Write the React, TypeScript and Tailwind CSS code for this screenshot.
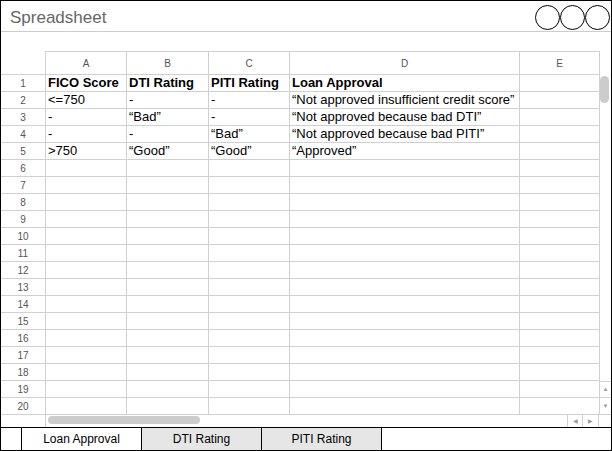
import React from "react";

const cols = [
    { key: "A", w: "w-[81px]" },
    { key: "B", w: "w-[82px]" },
    { key: "C", w: "w-[81px]" },
    { key: "D", w: "w-[230px]" },
    { key: "E", w: "w-[80px]" },
];

const data: string[][] = [
    ["FICO Score", "DTI Rating", "PITI Rating", "Loan Approval", ""],
    ["<=750", "-", "-", "\u201CNot approved insufficient credit score\u201D", ""],
    ["-", "\u201CBad\u201D", "-", "\u201CNot approved because bad DTI\u201D", ""],
    ["-", "-", "\u201CBad\u201D", "\u201CNot approved because bad PITI\u201D", ""],
    [">750", "\u201CGood\u201D", "\u201CGood\u201D", "\u201CApproved\u201D", ""],
];

const rows = Array.from({ length: 20 }, (_, i) => i + 1);

export default function App() {
    return (
        <div className="flex h-[451px] w-[612px] flex-col border border-black bg-white font-['Liberation_Sans',Arial,sans-serif] text-black">
            {/* title bar */}
            <div className="flex h-[31px] shrink-0 items-start justify-between border-b border-[#cccccc]">
                <span className="pl-[9px] pt-[6px] text-[17px] leading-[22px] text-[#666666]">Spreadsheet</span>
                <div className="flex pr-[1px] pt-[4px]">
                    <div className="h-[25px] w-[25px] rounded-full border border-black" />
                    <div className="h-[25px] w-[25px] rounded-full border border-black" />
                    <div className="h-[25px] w-[25px] rounded-full border border-black" />
                </div>
            </div>

            <div className="h-[19px] shrink-0" />

            {/* grid + vertical scrollbar */}
            <div className="flex shrink-0">
                <div className="flex w-[599px] flex-col">
                    <div className="flex h-[24px]">
                        <div className="w-[45px] border-b border-r border-[#d0d0d0]" />
                        {cols.map((c) => (
                            <div
                                key={c.key}
                                className={`${c.w} flex items-center justify-center border-b border-r border-t border-[#d0d0d0] text-[10px] text-[#555555]`}
                            >
                                {c.key}
                            </div>
                        ))}
                    </div>
                    {rows.map((r) => (
                        <div key={r} className="flex h-[17px]">
                            <div className="flex w-[45px] items-center justify-center border-b border-r border-[#d0d0d0] text-[10px] text-[#555555]">
                                {r}
                            </div>
                            {cols.map((c, ci) => (
                                <div
                                    key={c.key}
                                    className={`${c.w} overflow-hidden whitespace-nowrap border-b border-r border-[#d0d0d0] pl-[2px] text-[13px] leading-[16px] ${r === 1 ? "font-bold" : ""}`}
                                >
                                    {data[r - 1]?.[ci] ?? ""}
                                </div>
                            ))}
                        </div>
                    ))}
                </div>
                <div className="flex w-[11px] flex-col">
                    <div className="h-[25px]" />
                    <div className="h-[27px] w-[9px] rounded-[5px] bg-[#cccccc]" />
                    <div className="flex-1" />
                    <div className="flex h-[17px] items-center justify-center border-b border-t border-[#d0d0d0] text-[6px] text-[#999999]">
                        ▲
                    </div>
                    <div className="flex h-[17px] items-center justify-center border-b border-[#d0d0d0] text-[6px] text-[#999999]">
                        ▼
                    </div>
                </div>
            </div>

            {/* horizontal scrollbar */}
            <div className="flex h-[12px] shrink-0">
                <div className="w-[45px] border-r border-[#d0d0d0]" />
                <div className="flex flex-1 items-start pl-[2px] pt-[1px]">
                    <div className="h-[8px] w-[152px] rounded-full bg-[#cccccc]" />
                </div>
                <div className="flex w-[15px] items-center justify-center border-l border-[#d0d0d0] text-[6px] text-[#999999]">
                    ◀
                </div>
                <div className="flex w-[16px] items-center justify-center border-l border-[#d0d0d0] text-[6px] text-[#999999]">
                    ▶
                </div>
                <div className="w-[13px] border-l border-[#d0d0d0]" />
            </div>

            {/* sheet tabs */}
            <div className="flex h-[23px] shrink-0 border-t border-black text-[12px]">
                <div className="w-[21px] border-r border-black" />
                <div className="flex w-[120px] items-center justify-center border-r border-black">Loan Approval</div>
                <div className="flex w-[120px] items-center justify-center border-r border-black bg-[#e6e6e6]">DTI Rating</div>
                <div className="flex w-[120px] items-center justify-center border-r border-black bg-[#e6e6e6]">PITI Rating</div>
                <div className="flex-1" />
            </div>
        </div>
    );
}
